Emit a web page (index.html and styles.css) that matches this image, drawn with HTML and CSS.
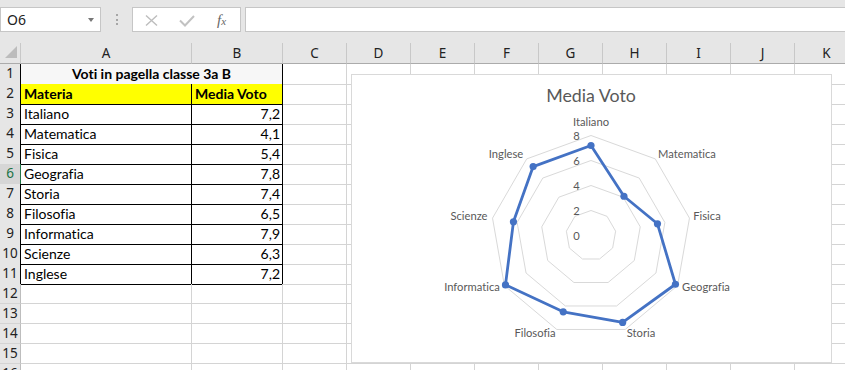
FILE: index.html
```html
<!DOCTYPE html>
<html>
    <head>
        <meta charset="UTF-8">
        <title>Voti in pagella</title>
        <link rel="stylesheet" href="styles.css">
    </head>
    <body>
<div class="toolbar">
    <div class="namebox"><span>O6</span><span class="caret"></span></div>
    <div class="dots"><i></i><i></i><i></i></div>
    <div class="fbtns">
        <svg width="107" height="23" viewBox="0 0 107 23">
            <path d="M13 7.5 L24 17.5 M24 7.5 L13 17.5" stroke="#bdbdbd" stroke-width="1.4" fill="none"/>
            <polyline points="47,12.5 52,17.5 61,8" stroke="#c2c2c2" stroke-width="2" fill="none"/>
            <text x="84" y="17" class="fx">f<tspan font-size="11" dy="0">x</tspan></text>
        </svg>
    </div>
    <div class="finput"></div>
</div>

<div class="sheet">
    <div class="row head">
        <div class="corner"><svg width="20" height="20"><polygon points="5,15 17,15 17,3" fill="#bcbcbc"/></svg></div>
        <div>A</div><div>B</div><div>C</div><div>D</div><div>E</div><div>F</div>
        <div>G</div><div>H</div><div>I</div><div>J</div><div>K</div>
    </div>
    <div class="row t"><div class="rh">1</div><div class="c title">Voti in pagella classe 3a B</div><div class="rest"></div></div>
    <div class="row t"><div class="rh">2</div><div class="c hdr">Materia</div><div class="c hdr">Media Voto</div><div class="rest"></div></div>
    <div class="row t"><div class="rh">3</div><div class="c">Italiano</div><div class="c num">7,2</div><div class="rest"></div></div>
    <div class="row t"><div class="rh">4</div><div class="c">Matematica</div><div class="c num">4,1</div><div class="rest"></div></div>
    <div class="row t"><div class="rh">5</div><div class="c">Fisica</div><div class="c num">5,4</div><div class="rest"></div></div>
    <div class="row t"><div class="rh sel">6</div><div class="c">Geografia</div><div class="c num">7,8</div><div class="rest"></div></div>
    <div class="row t"><div class="rh">7</div><div class="c">Storia</div><div class="c num">7,4</div><div class="rest"></div></div>
    <div class="row t"><div class="rh">8</div><div class="c">Filosofia</div><div class="c num">6,5</div><div class="rest"></div></div>
    <div class="row t"><div class="rh">9</div><div class="c">Informatica</div><div class="c num">7,9</div><div class="rest"></div></div>
    <div class="row t"><div class="rh">10</div><div class="c">Scienze</div><div class="c num">6,3</div><div class="rest"></div></div>
    <div class="row t"><div class="rh">11</div><div class="c">Inglese</div><div class="c num">7,2</div><div class="rest"></div></div>
    <div class="row"><div class="rh">12</div><div class="c"></div><div class="c"></div><div class="rest"></div></div>
    <div class="row"><div class="rh">13</div><div class="c"></div><div class="c"></div><div class="rest"></div></div>
    <div class="row"><div class="rh">14</div><div class="c"></div><div class="c"></div><div class="rest"></div></div>
    <div class="row"><div class="rh">15</div><div class="c"></div><div class="c"></div><div class="rest"></div></div>
    <div class="row"><div class="rh">16</div><div class="c"></div><div class="c"></div><div class="rest"></div></div>

    <div class="chart">
        <svg width="479" height="287" viewBox="0 0 479 287">
        <g transform="translate(-1,-1)">
            <text x="240" y="28" class="ctitle">Media Voto</text>
            <g class="rings">
                <polygon points="240,61.5 304.28,84.9 338.48,144.14 326.6,211.5 274.2,255.47 205.8,255.47 153.4,211.5 141.52,144.14 175.72,84.9"/>
                <polygon points="240,86.5 288.21,104.05 313.86,148.48 304.95,199 265.65,231.98 214.35,231.98 175.05,199 166.14,148.48 191.79,104.05"/>
                <polygon points="240,111.5 272.14,123.2 289.24,152.82 283.3,186.5 257.1,208.49 222.9,208.49 196.7,186.5 190.76,152.82 207.86,123.2"/>
                <polygon points="240,136.5 256.07,142.35 264.62,157.16 261.65,174 248.55,184.99 231.45,184.99 218.35,174 215.38,157.16 223.93,142.35"/>
            </g>
            <g class="ticks">
                <text x="225.5" y="65.5">8</text>
                <text x="225.5" y="90.5">6</text>
                <text x="225.5" y="115.5">4</text>
                <text x="225.5" y="140.5">2</text>
                <text x="225.5" y="165.5">0</text>
            </g>
            <polygon class="series" points="240,71.5 272.94,122.24 306.47,149.78 324.44,210.25 271.64,248.42 212.21,237.85 154.48,210.88 162.45,147.83 182.15,92.56"/>
            <g class="marks">
                <circle cx="240" cy="71.5" r="3.6"/>
                <circle cx="272.94" cy="122.24" r="3.6"/>
                <circle cx="306.47" cy="149.78" r="3.6"/>
                <circle cx="324.44" cy="210.25" r="3.6"/>
                <circle cx="271.64" cy="248.42" r="3.6"/>
                <circle cx="212.21" cy="237.85" r="3.6"/>
                <circle cx="154.48" cy="210.88" r="3.6"/>
                <circle cx="162.45" cy="147.83" r="3.6"/>
                <circle cx="182.15" cy="92.56" r="3.6"/>
            </g>
            <g class="cats">
                <text x="240" y="52">Italiano</text>
                <text x="336" y="84">Matematica</text>
                <text x="356" y="146">Fisica</text>
                <text x="355" y="217">Geografia</text>
                <text x="290" y="263">Storia</text>
                <text x="184" y="263">Filosofia</text>
                <text x="121" y="217">Informatica</text>
                <text x="118" y="146">Scienze</text>
                <text x="155" y="84">Inglese</text>
            </g>
        </g>
        </svg>
    </div>
</div>
    </body>
</html>
```

FILE: styles.css
```css
body {
    margin: 0;
    background: #fff;
    overflow: hidden;
    font-family: "Noto Sans", "Liberation Sans", sans-serif;
    color: #222;
}

/* formula bar */
.toolbar {
    display: flex;
    align-items: flex-start;
    height: 43px;
    padding-top: 7px;
    box-sizing: border-box;
    background: #e6e6e6;
}

.namebox {
    width: 101px;
    height: 25px;
    box-sizing: border-box;
    border: 1px solid #c6c6c6;
    background: #fff;
    display: flex;
    align-items: center;
    justify-content: space-between;
    padding: 0 6px 0 6px;
    font-size: 14px;
}

.caret {
    border-left: 3.5px solid transparent;
    border-right: 3.5px solid transparent;
    border-top: 4px solid #777;
}

.dots {
    width: 31px;
    display: flex;
    flex-direction: column;
    align-items: center;
    gap: 2.5px;
    padding-top: 7px;
}

.dots i {
    width: 2px;
    height: 2px;
    background: #a6a6a6;
}

.fbtns {
    width: 109px;
    height: 25px;
    box-sizing: border-box;
    border: 1px solid #c6c6c6;
    background: #fff;
}

.fbtns svg {
    display: block;
}

.fx {
    font-family: "Liberation Serif", serif;
    font-style: italic;
    font-size: 15px;
    fill: #666;
}

.finput {
    flex: 1;
    margin-left: 4px;
    height: 25px;
    box-sizing: border-box;
    border: 1px solid #c6c6c6;
    border-right: none;
    background: #fff;
}

/* grid */
.sheet {
    position: relative;
}

.row {
    display: grid;
    grid-template-columns: 21px 171px 91px 1fr;
    height: 20px;
}

.row > div {
    box-sizing: border-box;
    border-right: 1px solid #d4d4d4;
    border-bottom: 1px solid #d4d4d4;
}

.head {
    height: 21px;
    grid-template-columns: 21px 171px 91px repeat(9, 64px);
    background: #e6e6e6;
}

.head > div {
    border-right-color: #c8c8c8;
    border-bottom-color: #ababab;
    text-align: center;
    font-size: 13.5px;
    line-height: 20px;
}

.corner svg {
    display: block;
}

.rh {
    background: #e6e6e6;
    text-align: center;
    font-size: 13.5px;
    line-height: 19px;
    border-right-color: #bdbdbd !important;
}

.t .rh {
    border-right-color: #000 !important;
}

.t .rh.sel {
    background: #d6d6d6;
    color: #217346;
    border-right-color: #217346 !important;
}

.rest {
    background: repeating-linear-gradient(90deg, transparent 0 63px, #d4d4d4 63px 64px);
    border-right: none !important;
}

.c {
    font-family: Lato, "Liberation Sans", sans-serif;
    font-variant-ligatures: none;
    font-size: 14px;
    line-height: 20px;
    padding: 0 3px;
    white-space: nowrap;
    color: #000;
}

.t .c {
    border-color: #000;
}

.num {
    text-align: right;
    padding-right: 2px;
}

.hdr {
    background: #ff0;
    font-weight: bold;
}

.title {
    grid-column: span 2;
    text-align: center;
    font-weight: bold;
    background: #f7f7f7;
}

/* chart */
.chart {
    position: absolute;
    left: 351px;
    top: 31px;
    width: 481px;
    height: 289px;
    box-sizing: border-box;
    border: 1px solid #d9d9d9;
    background: #fff;
}

.chart svg {
    display: block;
    font-family: Lato, "Liberation Sans", sans-serif;
    font-variant-ligatures: none;
}

.ctitle {
    font-size: 17.8px;
    fill: #595959;
    text-anchor: middle;
}

.rings polygon {
    fill: none;
    stroke: #d9d9d9;
    stroke-width: 1;
}

.ticks text,
.cats text {
    font-size: 11.2px;
    fill: #595959;
    text-anchor: middle;
}

.series {
    fill: none;
    stroke: #4472c4;
    stroke-width: 2.8;
    stroke-linejoin: round;
}

.marks circle {
    fill: #4472c4;
}
```
